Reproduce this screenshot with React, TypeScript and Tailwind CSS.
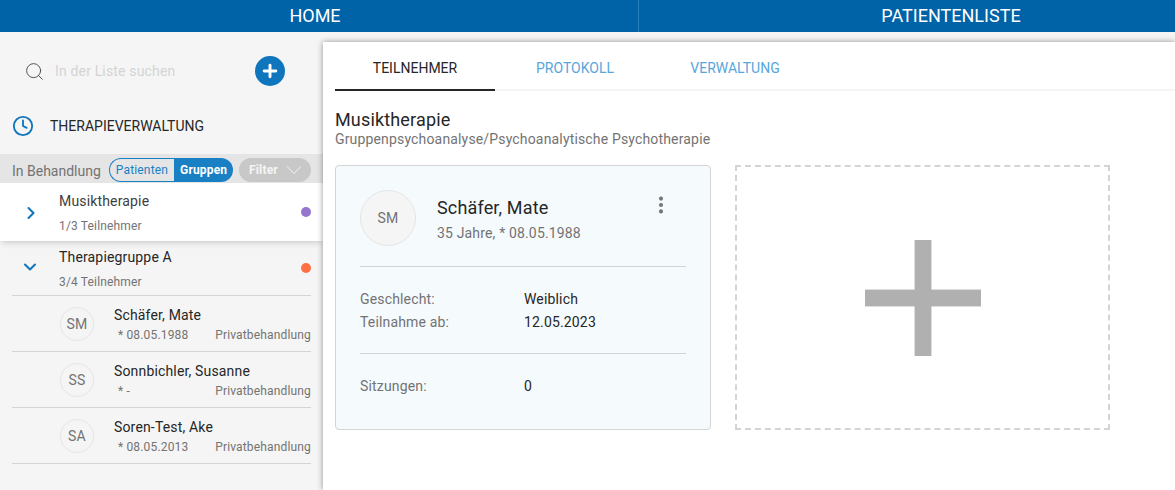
import { ChevronDown, ChevronRight, Clock, EllipsisVertical, Plus, Search } from "lucide-react";

const members = [
  { initials: "SM", name: "Schäfer, Mate", birth: "* 08.05.1988" },
  { initials: "SS", name: "Sonnbichler, Susanne", birth: "* -" },
  { initials: "SA", name: "Soren-Test, Ake", birth: "* 08.05.2013" },
];

function Sidebar() {
  return (
    <aside className="w-[323px] shrink-0 bg-neutral-100">
      {/* Search */}
      <div className="mt-6 flex h-8 items-start pl-6">
        <div className="flex h-7.5 items-center gap-2.5">
          <Search size={21} strokeWidth={1} className="text-neutral-700" />
          <span className="text-sm text-neutral-300">In der Liste suchen</span>
        </div>
        <button className="ml-20 flex h-7.5 w-7.5 items-center justify-center rounded-full bg-[#0f75bc] text-white">
          <Plus size={20} strokeWidth={3.5} />
        </button>
      </div>

      <div className="mt-2.5 flex h-14 items-center gap-4 pl-3">
        <Clock size={22} className="text-[#0f75bc]" />
        <span className="text-sm tracking-normal text-neutral-800">THERAPIEVERWALTUNG</span>
      </div>

      {/* Filter row */}
      <div className="flex items-center bg-neutral-200 px-3 pt-1 pb-px">
        <span className="pt-0.5 text-sm tracking-normal text-neutral-500">In Behandlung</span>
        <div className="ml-2 flex h-6 text-xs">
          <span className="flex items-center rounded-l-full border border-r-0 border-[#1a80c4] px-1.5 text-[#1a80c4]">
            Patienten
          </span>
          <span className="flex items-center rounded-r-full bg-[#1a80c4] px-1.5 font-bold text-white">Gruppen</span>
        </div>
        <div className="ml-auto flex h-6 w-18 items-center gap-2 rounded-full bg-[#c8c8c8] pl-2.5 text-xs font-bold text-neutral-100">
          Filter
          <svg viewBox="0 0 16 8" className="h-2 w-4" fill="none" stroke="currentColor">
            <path d="M1 .5 8 7.5 15 .5" />
          </svg>
        </div>
      </div>

      {/* Selected group */}
      <div className="relative flex h-14.5 bg-white pt-2 pr-3 shadow-md">
        <div className="flex w-14.5 items-start justify-center pt-3 pl-1">
          <ChevronRight size={20} strokeWidth={2.5} className="text-[#0f75bc]" />
        </div>
        <div className="flex-1 pl-px">
          <div className="text-sm leading-5 text-neutral-700">Musiktherapie</div>
          <div className="mt-1.5 text-xs leading-4.5 text-neutral-500">1/3 Teilnehmer</div>
        </div>
        <span className="mt-4 h-2.5 w-2.5 rounded-full bg-[#9575cd]" />
      </div>

      {/* Open group */}
      <div className="mx-3">
        <div className="flex h-13.75 border-b border-neutral-300 pt-1.5">
          <div className="flex w-11.5 items-start pt-2.5 pl-2">
            <ChevronDown size={20} strokeWidth={2.5} className="text-[#0f75bc]" />
          </div>
          <div className="flex-1 pl-px">
            <div className="text-sm leading-5 text-neutral-800">Therapiegruppe A</div>
            <div className="mt-1.5 text-xs leading-4.5 text-neutral-500">3/4 Teilnehmer</div>
          </div>
          <span className="mt-4 h-2.5 w-2.5 rounded-full bg-[#ff7043]" />
        </div>
        {members.map((m) => (
          <div key={m.initials} className="flex h-14 items-center gap-5 border-b border-neutral-300 pl-12">
            <div className="flex h-8.5 w-8.5 shrink-0 items-center justify-center rounded-full border border-neutral-200 text-sm text-neutral-500">
              {m.initials}
            </div>
            <div className="flex-1">
              <div className="text-sm leading-5 text-neutral-800">{m.name}</div>
              <div className="mt-0.5 flex justify-between pl-1 text-xs leading-4 text-neutral-500">
                <span>{m.birth}</span>
                <span>Privatbehandlung</span>
              </div>
            </div>
          </div>
        ))}
      </div>
    </aside>
  );
}

function ParticipantCard() {
  return (
    <div className="w-94 rounded-sm border border-neutral-300 bg-[#f5fafd] p-6">
      <div className="flex">
        <div className="flex h-14 w-14 shrink-0 items-center justify-center rounded-full border border-neutral-200 bg-neutral-100 text-sm text-neutral-500">
          SM
        </div>
        <div className="mt-1 ml-5 flex-1 pl-px">
          <div className="text-lg leading-7 text-neutral-800">Schäfer, Mate</div>
          <div className="mt-px text-sm leading-5 text-neutral-500">35 Jahre, * 08.05.1988</div>
        </div>
        <EllipsisVertical size={22} strokeWidth={2.5} className="mt-1 mr-3.5 text-neutral-500" />
      </div>
      <div className="mt-5 border-t border-neutral-300" />
      <div className="mt-5 text-sm">
        <div className="flex leading-6">
          <span className="w-41 text-neutral-500">Geschlecht:</span>
          <span className="text-neutral-800">Weiblich</span>
        </div>
        <div className="flex leading-5.5">
          <span className="w-41 text-neutral-500">Teilnahme ab:</span>
          <span className="text-neutral-800">12.05.2023</span>
        </div>
      </div>
      <div className="mt-5 border-t border-neutral-300" />
      <div className="mt-5 flex text-sm leading-6">
        <span className="w-41 text-neutral-500">Sitzungen:</span>
        <span className="text-neutral-800">0</span>
      </div>
    </div>
  );
}

export default function App() {
  return (
    <div className="flex h-screen flex-col overflow-hidden bg-neutral-100 font-['Roboto',sans-serif] tracking-[0.01em]">
      <header className="flex h-8 shrink-0 bg-[#0063a8] text-lg tracking-normal text-white">
        <div className="flex w-[639px] items-center justify-center border-r border-[#2a7fbc] pr-2">HOME</div>
        <div className="flex flex-1 items-center justify-center pl-22">PATIENTENLISTE</div>
      </header>

      <div className="flex flex-1">
        <Sidebar />
        <main className="relative mt-2.5 flex-1 bg-white pl-3 shadow-[0_0_6px_rgba(0,0,0,0.4)]">
          <nav className="flex border-b-2 border-neutral-100 text-sm tracking-normal">
            <div className="-mb-0.5 flex h-12.25 w-40 items-center justify-center border-b-2 border-neutral-800 pt-1 text-neutral-800">
              TEILNEHMER
            </div>
            <div className="flex w-40 items-center justify-center pt-1 text-[#58a6dc]">PROTOKOLL</div>
            <div className="flex w-40 items-center justify-center pt-1 text-[#58a6dc]">VERWALTUNG</div>
          </nav>

          <h1 className="mt-4 text-lg leading-6.5 text-neutral-800">Musiktherapie</h1>
          <p className="text-sm leading-3 text-neutral-500">Gruppenpsychoanalyse/Psychoanalytische Psychotherapie</p>

          <div className="mt-5 flex h-66.25 gap-6">
            <ParticipantCard />
            <div className="flex w-93.75 items-center justify-center border-2 border-dashed border-neutral-300">
              <svg viewBox="0 0 117 117" className="h-29 w-29 text-[#b0b0b0]" fill="currentColor">
                <rect x="50" width="17" height="117" />
                <rect y="50" width="117" height="17" />
              </svg>
            </div>
          </div>
        </main>
      </div>
    </div>
  );
}
